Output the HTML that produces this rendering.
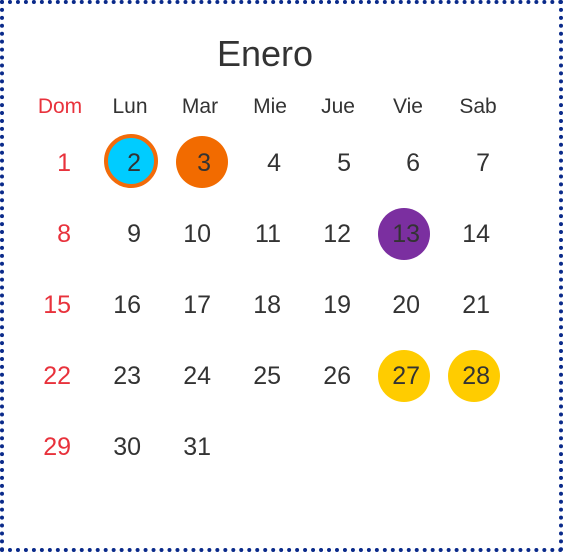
<!DOCTYPE html>
<html><head><meta charset="utf-8"><style>
body{margin:0;width:565px;height:556px;background:#fff;position:relative;font-family:"Liberation Sans",sans-serif;overflow:hidden}
.box{position:absolute;left:0;top:0;width:555px;height:544px;border:4px dotted #0a2a8a}
.t{position:absolute;color:#333}
.title{left:0;width:530px;text-align:center;top:33px;font-size:36px;color:#333}
.wd{position:absolute;top:95px;width:80px;margin-left:-40px;text-align:center;font-size:21px;color:#333}
.n{position:absolute;width:60px;margin-left:-60px;text-align:right;font-size:25px;color:#333;line-height:30px}
.r{color:#e8323c}
.c{position:absolute;width:52px;height:52px;border-radius:50%;margin:-26px 0 0 -26px}
</style></head><body>
<div class="box"></div>
<div class="t title">Enero</div>
<div class="wd r" style="left:60px">Dom</div>
<div class="wd" style="left:130px">Lun</div>
<div class="wd" style="left:200px">Mar</div>
<div class="wd" style="left:270px">Mie</div>
<div class="wd" style="left:338px">Jue</div>
<div class="wd" style="left:408px">Vie</div>
<div class="wd" style="left:478px">Sab</div>
<div class="c" style="left:131px;top:161px;background:#00ccff;border:4px solid #f26b0a;width:46px;height:46px;margin:-27px 0 0 -27px"></div>
<div class="c" style="left:202px;top:162px;background:#f26b00"></div>
<div class="c" style="left:404px;top:234px;background:#7b2fa0"></div>
<div class="c" style="left:404px;top:376px;background:#ffcc00"></div>
<div class="c" style="left:474px;top:376px;background:#ffcc00"></div>
<div id="g"></div>
<script>
var xs=[71,141,211,281,351,420,490],ys=[163,234,305,376,447],h='';
for(var d=1;d<=31;d++){var i=d-1,c=i%7,r=Math.floor(i/7);
h+='<div class="n'+(c==0?' r':'')+'" style="left:'+xs[c]+'px;top:'+(ys[r]-15)+'px">'+d+'</div>';}
document.getElementById('g').innerHTML=h;
</script>
</body></html>
